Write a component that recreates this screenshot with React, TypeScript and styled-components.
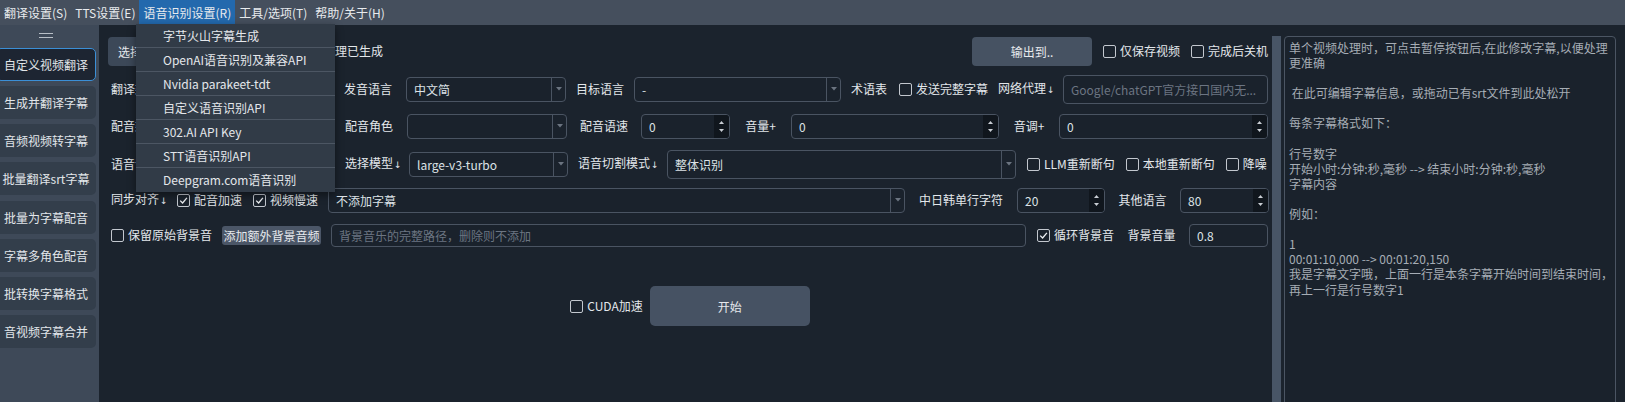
import styled, { createGlobalStyle } from 'styled-components';

const GlobalStyle = createGlobalStyle`
  html, body {
    margin: 0;
    padding: 0;
    background: #1b232d;
  }
  body {
    font-family: "Noto Sans CJK SC", "Noto Sans", sans-serif;
    font-size: 12px;
    color: #e2e6ea;
  }
  * {
    box-sizing: border-box;
  }
`;

const menus = ['翻译设置(S)', 'TTS设置(E)', '语音识别设置(R)', '工具/选项(T)', '帮助/关于(H)'];

const asrItems = [
  '字节火山字幕生成',
  'OpenAI语音识别及兼容API',
  'Nvidia parakeet-tdt',
  '自定义语音识别API',
  '302.AI API Key',
  'STT语音识别API',
  'Deepgram.com语音识别',
];

const navItems = [
  '自定义视频翻译',
  '生成并翻译字幕',
  '音频视频转字幕',
  '批量翻译srt字幕',
  '批量为字幕配音',
  '字幕多角色配音',
  '批转换字幕格式',
  '音视频字幕合并',
];

const helpText = [
  '单个视频处理时，可点击暂停按钮后,在此修改字幕,以便处理',
  '更准确',
  '',
  ' 在此可编辑字幕信息，或拖动已有srt文件到此处松开',
  '',
  '每条字幕格式如下：',
  '',
  '行号数字',
  '开始小时:分钟:秒,毫秒 --> 结束小时:分钟:秒,毫秒',
  '字幕内容',
  '',
  '例如：',
  '',
  '1',
  '00:01:10,000 --> 00:01:20,150',
  '我是字幕文字哦，上面一行是本条字幕开始时间到结束时间，',
  '再上一行是行号数字1',
].join('\n');

const CheckMark = () => (
  <svg width="9" height="9" viewBox="0 0 9 9">
    <path d="M1.2 4.6 L3.6 7 L7.9 1.8" fill="none" stroke="#eef1f4" strokeWidth="1.3" />
  </svg>
);

const Check = ({ label, checked, $ml }: { label: string; checked?: boolean; $ml?: number }) => (
  <CheckWrap $ml={$ml}>
    <CheckBox>{checked && <CheckMark />}</CheckBox>
    <span>{label}</span>
  </CheckWrap>
);

const Combo = ({ value, $w, $h }: { value?: string; $w: number; $h?: number }) => (
  <Field $w={$w} $h={$h}>
    <FieldValue>{value}</FieldValue>
    <ArrowBox>
      <svg width="6" height="4" viewBox="0 0 6 4">
        <path d="M0 0 L6 0 L3 3.5 Z" fill="#6b7480" />
      </svg>
    </ArrowBox>
  </Field>
);

const Spin = ({ value, $w }: { value: string; $w: number }) => (
  <Field $w={$w}>
    <FieldValue>{value}</FieldValue>
    <SpinBtns>
      <svg width="5" height="3" viewBox="0 0 5 3">
        <path d="M0 3 L5 3 L2.5 0 Z" fill="#c9ced4" />
      </svg>
      <svg width="5" height="3" viewBox="0 0 5 3">
        <path d="M0 0 L5 0 L2.5 3 Z" fill="#c9ced4" />
      </svg>
    </SpinBtns>
  </Field>
);

const App = () => {
  return (
    <>
      <GlobalStyle />
      <Window>
        <MenuBar>
          {menus.map((m) => (
            <MenuItem key={m} $active={m === '语音识别设置(R)'}>
              {m}
            </MenuItem>
          ))}
        </MenuBar>

        <Dropdown>
          {asrItems.map((item) => (
            <DropItem key={item}>{item}</DropItem>
          ))}
        </Dropdown>

        <Body>
          <Sidebar>
            <Handle />
            <NavList>
              {navItems.map((n, i) => (
                <NavButton key={n} $active={i === 0}>
                  {n}
                </NavButton>
              ))}
            </NavList>
          </Sidebar>

          <Main>
            <Row $mt={11}>
              <Button $w={44} $h={29} $bg="#3c4858">
                选择
              </Button>
              <Label $w={221} $align="right">
                理已生成
              </Label>
              <Spacer />
              <Button $w={120} $h={29} $bg="#465262">
                输出到..
              </Button>
              <Check label="仅保存视频" />
              <Check label="完成后关机" />
            </Row>

            <Row $mt={8}>
              <FirstLabel $w={48}>翻译渠道</FirstLabel>
              <Combo $w={165} />
              <Label $w={52}>发音语言</Label>
              <Combo $w={160} value="中文简" />
              <Label $w={48}>目标语言</Label>
              <Combo $w={207} value="-" />
              <Label $w={37}>术语表</Label>
              <Check label="发送完整字幕" />
              <Label $w={55}>
                网络代理<Arrow>↓</Arrow>
              </Label>
              <Field $w={205} $h={29}>
                <FieldValue $placeholder>Google/chatGPT官方接口国内无...</FieldValue>
              </Field>
            </Row>

            <Row $mt={7}>
              <FirstLabel $w={48}>配音渠道</FirstLabel>
              <Combo $w={166} />
              <Label $w={52}>配音角色</Label>
              <Combo $w={160} />
              <Label $w={54} $align="center">
                配音语速
              </Label>
              <Spin $w={89} value="0" />
              <Label $w={41} $align="center">
                音量+
              </Label>
              <Spin $w={208} value="0" />
              <Label $w={40} $align="center">
                音调+
              </Label>
              <Spin $w={209} value="0" />
            </Row>

            <Row $mt={8}>
              <FirstLabel $w={48}>语音识别</FirstLabel>
              <Combo $w={166} />
              <Label $w={54}>
                选择模型<Arrow>↓</Arrow>
              </Label>
              <Combo $w={159} value="large-v3-turbo" />
              <Label $w={79}>
                语音切割模式<Arrow>↓</Arrow>
              </Label>
              <Combo $w={349} $h={29} value="整体识别" />
              <Check label="LLM重新断句" />
              <Check label="本地重新断句" />
              <Check label="降噪" />
            </Row>

            <Row $mt={6}>
              <FirstLabel $w={55}>
                同步对齐<Arrow>↓</Arrow>
              </FirstLabel>
              <Check label="配音加速" checked />
              <Check label="视频慢速" checked />
              <Combo $w={577} value="不添加字幕" />
              <Label $w={92} $align="center">
                中日韩单行字符
              </Label>
              <Spin $w={88} value="20" />
              <Label $w={55} $align="center">
                其他语言
              </Label>
              <Spin $w={89} value="80" />
            </Row>

            <Row $mt={5}>
              <Check label="保留原始背景音" $ml={3} />
              <Button $w={99} $h={19} $bg="#4b5667" $radius={3}>
                添加额外背景音频
              </Button>
              <Field $w={695} $h={23}>
                <FieldValue $placeholder>背景音乐的完整路径，删除则不添加</FieldValue>
              </Field>
              <Check label="循环背景音" checked />
              <Label $w={55} $align="center">
                背景音量
              </Label>
              <Field $w={79} $h={23}>
                <FieldValue>0.8</FieldValue>
              </Field>
            </Row>

            <StartRow>
              <Check label="CUDA加速" />
              <Button $w={160} $h={40} $bg="#465263" $radius={5}>
                开始
              </Button>
            </StartRow>
          </Main>

          <Splitter />

          <RightPanel>
            <SubtitleEditor>{helpText}</SubtitleEditor>
          </RightPanel>
        </Body>
      </Window>
    </>
  );
};

export default App;

// Styled Components
const Window = styled.div`
  position: relative;
  width: 1625px;
  height: 402px;
  overflow: hidden;
  display: flex;
  flex-direction: column;
  background: #1b232d;
`;

const MenuBar = styled.div`
  height: 25px;
  flex-shrink: 0;
  display: flex;
  align-items: stretch;
  background: #454f5d;
`;

const MenuItem = styled.div<{ $active?: boolean }>`
  padding: 0 4px;
  line-height: 25px;
  color: #e8ebee;
  white-space: nowrap;
  background: ${(p) => (p.$active ? '#2369ad' : 'transparent')};
`;

const Dropdown = styled.div`
  position: absolute;
  left: 136px;
  top: 24px;
  width: 199px;
  background: #313b47;
  box-shadow: 0 3px 8px rgba(0, 0, 0, 0.45);
  z-index: 10;
`;

const DropItem = styled.div`
  height: 24px;
  line-height: 23px;
  padding-left: 27px;
  color: #e4e7eb;
  white-space: nowrap;
  border-bottom: 1px solid #4c5663;

  &:last-child {
    border-bottom: none;
  }
`;

const Body = styled.div`
  flex: 1;
  min-height: 0;
  display: flex;
`;

const Sidebar = styled.div`
  width: 99px;
  flex-shrink: 0;
  background: #3e4958;
  display: flex;
  flex-direction: column;
  align-items: flex-start;
  padding-top: 8px;
`;

const Handle = styled.div`
  width: 14px;
  height: 5px;
  margin: 0 0 10px 39px;
  border-top: 1.5px solid #b8bfc7;
  border-bottom: 1.5px solid #b8bfc7;
`;

const NavList = styled.div`
  display: flex;
  flex-direction: column;
  gap: 5.15px;
`;

const NavButton = styled.div<{ $active?: boolean }>`
  width: 100px;
  height: 33px;
  margin-left: -4px;
  border-radius: 5px;
  display: flex;
  align-items: center;
  justify-content: center;
  white-space: nowrap;
  color: #e2e6ea;
  background: ${(p) => (p.$active ? '#1d2532' : '#333e4b')};
  border: 1px solid ${(p) => (p.$active ? '#3b8fd6' : 'transparent')};
`;

const Main = styled.div`
  flex: 1;
  min-width: 0;
  display: flex;
  flex-direction: column;
  padding: 0 4px 0 9px;
`;

const Row = styled.div<{ $mt: number }>`
  height: 30px;
  margin-top: ${(p) => p.$mt}px;
  display: flex;
  align-items: center;
  gap: 10px;
`;

const StartRow = styled.div`
  height: 40px;
  margin-top: 36px;
  display: flex;
  align-items: center;
  justify-content: center;
  gap: 7px;
  padding-left: 3px;
`;

const Spacer = styled.div`
  flex: 1;
`;

const Label = styled.div<{ $w: number; $align?: 'left' | 'center' | 'right' }>`
  width: ${(p) => p.$w}px;
  flex-shrink: 0;
  white-space: nowrap;
  text-align: ${(p) => p.$align || 'left'};
  line-height: 16px;
  color: #e3e7eb;
`;

const Arrow = styled.span`
  font-family: "DejaVu Sans", sans-serif;
  font-size: 9px;
  margin-left: 1px;
`;

const FirstLabel = styled(Label)`
  margin-left: 3px;
`;

const Button = styled.div<{ $w: number; $h: number; $bg: string; $radius?: number }>`
  width: ${(p) => p.$w}px;
  height: ${(p) => p.$h}px;
  flex-shrink: 0;
  border-radius: ${(p) => p.$radius ?? 4}px;
  background: ${(p) => p.$bg};
  color: #e6e9ed;
  display: flex;
  align-items: center;
  justify-content: center;
  white-space: nowrap;
  overflow: hidden;
`;

const Field = styled.div<{ $w: number; $h?: number }>`
  width: ${(p) => p.$w}px;
  height: ${(p) => p.$h ?? 25}px;
  flex-shrink: 0;
  display: flex;
  align-items: stretch;
  border: 1px solid #4a5462;
  border-radius: 4px;
  background: #1a222c;
  overflow: hidden;
`;

const FieldValue = styled.div<{ $placeholder?: boolean }>`
  flex: 1;
  min-width: 0;
  display: flex;
  align-items: center;
  padding-left: 7px;
  white-space: nowrap;
  overflow: hidden;
  color: ${(p) => (p.$placeholder ? '#6c7582' : '#dde2e7')};
`;

const ArrowBox = styled.div`
  width: 14px;
  flex-shrink: 0;
  display: flex;
  align-items: center;
  justify-content: center;
  border-left: 1px solid #4a5462;
`;

const SpinBtns = styled.div`
  width: 15px;
  flex-shrink: 0;
  display: flex;
  flex-direction: column;
  align-items: center;
  justify-content: center;
  gap: 5px;
  background: #10161d;
`;

const CheckWrap = styled.div<{ $ml?: number }>`
  display: flex;
  align-items: center;
  gap: 4px;
  flex-shrink: 0;
  margin-left: ${(p) => p.$ml ?? 1}px;
  white-space: nowrap;
  color: #e3e7eb;
  line-height: 16px;
`;

const CheckBox = styled.div`
  width: 13px;
  height: 13px;
  border: 1px solid #c3c8cf;
  border-radius: 2px;
  display: flex;
  align-items: center;
  justify-content: center;
`;

const Splitter = styled.div`
  width: 9px;
  flex-shrink: 0;
  margin-top: 11px;
  background: #485566;
`;

const RightPanel = styled.div`
  width: 344px;
  flex-shrink: 0;
  padding: 11px 9px 0 3px;
`;

const SubtitleEditor = styled.div`
  width: 332px;
  height: 400px;
  border: 1px solid #4b5563;
  border-radius: 4px;
  background: #1a222c;
  padding: 3px 4px;
  white-space: pre;
  overflow: hidden;
  line-height: 15.1px;
  color: #a6adb5;
`;
